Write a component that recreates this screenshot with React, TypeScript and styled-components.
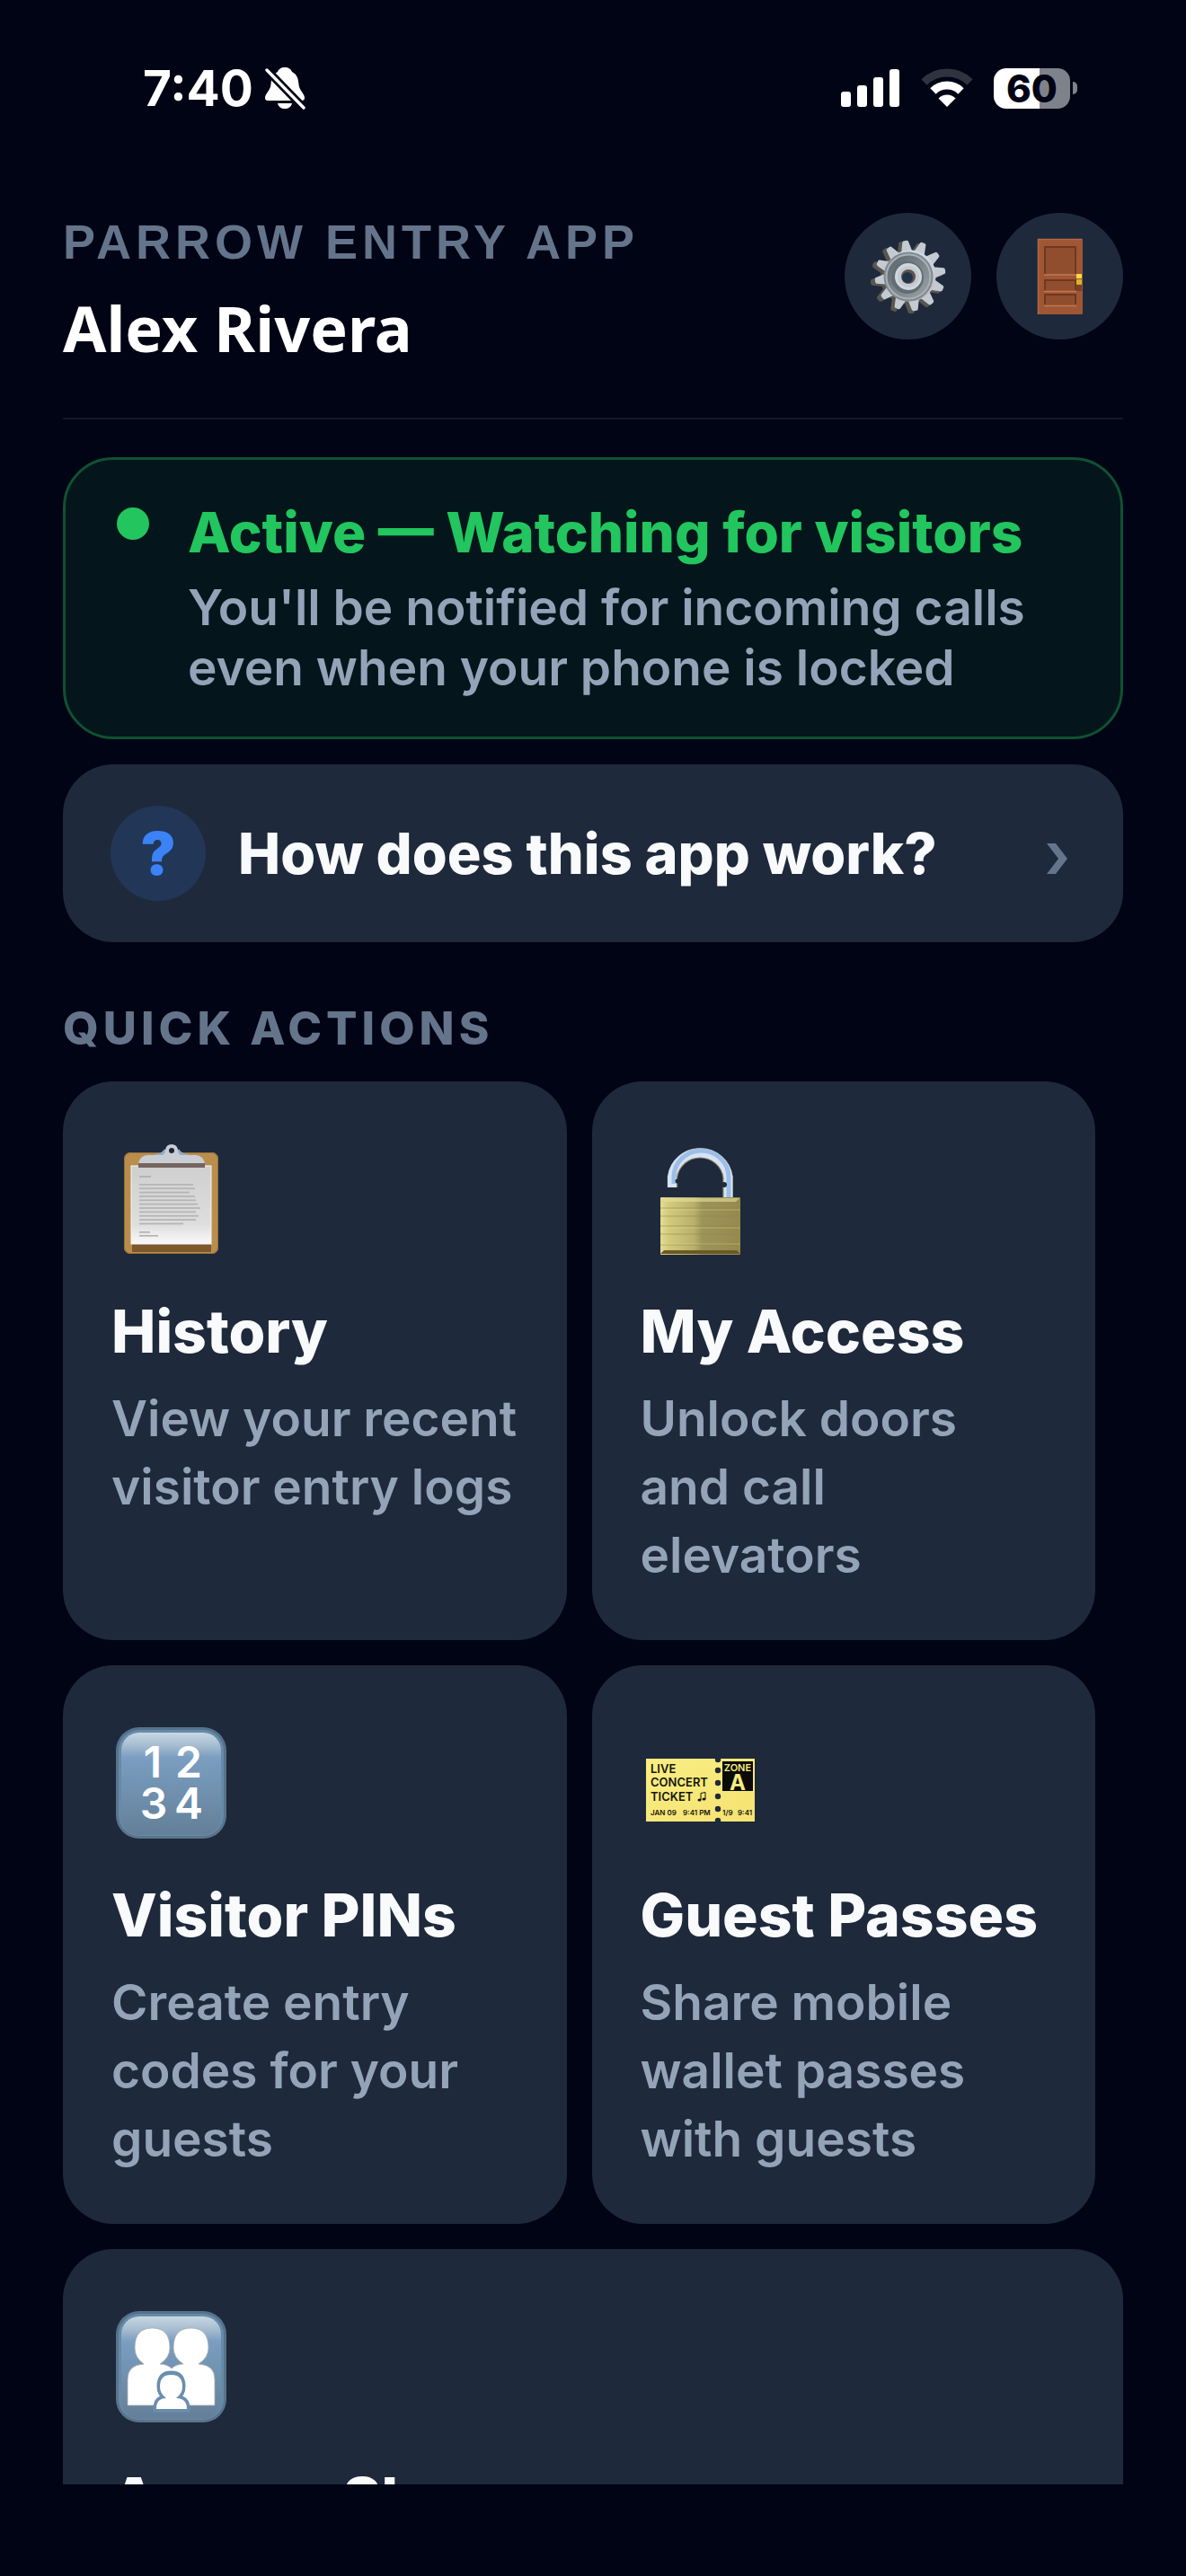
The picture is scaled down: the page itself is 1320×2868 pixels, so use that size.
import React from 'react';
import styled, { createGlobalStyle } from 'styled-components';

const color = {
  page: '#010414',
  panel: '#1e293b',
  text: '#f8fafc',
  body: '#94a3b8',
  muted: '#64748b',
  green: '#22c55e',
  blue: '#3b82f6',
};

const sans = `Inter, 'Liberation Sans', sans-serif`;
const humanist = `'Noto Sans', 'Open Sans', sans-serif`;

const GlobalStyle = createGlobalStyle`
  * { box-sizing: border-box; }
  body { margin: 0; background: ${color.page}; }
  h1, h2, h3, p { margin: 0; }
  button { border: 0; margin: 0; font: inherit; color: inherit; text-align: left; cursor: pointer; }
`;

const Screen = styled.div`
  height: 100vh;
  display: flex;
  flex-direction: column;
  padding-bottom: 102px;
  background: ${color.page};
  color: ${color.text};
  font-family: ${sans};
`;

const StatusBar = styled.div`
  flex: none;
  display: flex;
  align-items: center;
  justify-content: space-between;
  height: 196px;
  padding: 0 121px 0 159px;
`;

const StatusGroup = styled.div<{ $gap: number }>`
  display: flex;
  align-items: center;
  gap: ${(p) => p.$gap}px;
`;

const Clock = styled.span`
  font: 700 55px/64px ${sans};
  color: #fff;
`;

const Battery = styled.div`
  display: flex;
  align-items: center;
  gap: 3px;
`;

const BatteryBody = styled.div<{ $level: number }>`
  width: 85px;
  height: 45px;
  border-radius: 14px;
  background: linear-gradient(
    90deg,
    #fff ${(p) => p.$level}%,
    #80828b ${(p) => p.$level}%
  );
  color: ${color.page};
  font: 800 42px/45px ${sans};
  text-align: center;
`;

const BatteryTip = styled.div`
  width: 5px;
  height: 14px;
  border-radius: 0 7px 7px 0;
  background: #80828b;
`;

const Content = styled.main`
  flex: 1;
  min-height: 0;
  overflow: hidden;
  padding: 41px 70px 0;
`;

const Header = styled.header`
  display: flex;
  justify-content: space-between;
  align-items: flex-start;
  padding-bottom: 56px;
  border-bottom: 2px solid #111827;
`;

const AppName = styled.p`
  font: 700 54px/64px 'Liberation Sans', sans-serif;
  letter-spacing: 5px;
  text-transform: uppercase;
  color: ${color.muted};
`;

const UserName = styled.h1`
  margin-top: 20px;
  font: 700 70px/88px ${humanist};
  color: #fff;
`;

const HeaderActions = styled.div`
  display: flex;
  gap: 28px;
`;

const RoundButton = styled.button`
  display: grid;
  place-items: center;
  width: 141px;
  height: 141px;
  padding: 0;
  border-radius: 50%;
  background: ${color.panel};
`;

const StatusCard = styled.section`
  display: flex;
  align-items: flex-start;
  gap: 43px;
  margin-top: 42px;
  padding: 43px 57px;
  border: 3px solid #0f5132;
  border-radius: 56px;
  background: #04161b;
`;

const Dot = styled.span`
  flex: none;
  width: 36px;
  height: 36px;
  margin-top: 10px;
  border-radius: 50%;
  background: ${color.green};
`;

const StatusTitle = styled.h2`
  font: 800 62px/76px ${sans};
  color: ${color.green};
`;

const StatusText = styled.p`
  margin-top: 12px;
  font: 600 55px/67px ${sans};
  color: ${color.body};
`;

const HelpButton = styled.button`
  display: flex;
  align-items: center;
  gap: 36px;
  width: 100%;
  margin-top: 28px;
  padding: 46px 60px 46px 53px;
  border-radius: 56px;
  background: ${color.panel};
`;

const HelpBadge = styled.span`
  flex: none;
  width: 106px;
  height: 106px;
  border-radius: 50%;
  background: #223657;
  color: ${color.blue};
  font: 900 66px/106px ${sans};
  text-align: center;
`;

const HelpLabel = styled.span`
  flex: 1;
  font: 800 63px/76px ${sans};
  color: ${color.text};
`;

const SectionTitle = styled.h2`
  margin: 66px 0 29px;
  font: 800 51px/60px ${sans};
  letter-spacing: 5px;
  text-transform: uppercase;
  color: ${color.muted};
`;

const ActionList = styled.div`
  display: flex;
  flex-wrap: wrap;
  gap: 28px;
`;

const ActionCard = styled.button<{ $wide?: boolean }>`
  display: flex;
  flex-direction: column;
  align-items: flex-start;
  width: ${(p) => (p.$wide ? '100%' : '47.5%')};
  padding: 69px 50px 57px 54px;
  border-radius: 56px;
  background: ${color.panel};
`;

const ActionTitle = styled.span`
  margin-top: 46px;
  font: 800 66px/78px ${sans};
  color: ${color.text};
`;

const ActionText = styled.span`
  margin-top: 20px;
  font: 600 55px/76px ${sans};
  color: ${color.body};
  white-space: pre-line;
`;

function BellOff() {
  return (
    <svg width="46" height="48" viewBox="0 0 46 48" aria-label="Silent mode">
      <defs>
        <mask id="bell-cut">
          <rect width="46" height="48" fill="#fff" />
          <path d="M3 4 L43 45" stroke="#000" strokeWidth="9" />
        </mask>
      </defs>
      <g fill="#fff" mask="url(#bell-cut)">
        <path d="M23 1c-4 0-7 2-8 5C9 9 8 14 7.500 20C7 27 1 30 1 35c0 2 1 3 3 3h38c2 0 3-1 3-3c0-5-6-8-6.500-15C38 14 37 9 31 6c-1-3-4-5-8-5z" />
        <path d="M15 41h16c-1 4-4 6-8 6s-7-2-8-6z" />
      </g>
      <path d="M3 4 L44 46" stroke="#fff" strokeWidth="3.400" strokeLinecap="round" />
    </svg>
  );
}

function Signal() {
  return (
    <svg width="66" height="44" viewBox="0 0 66 44" fill="#fff" aria-label="Signal">
      <rect x="0" y="26" width="11" height="17" rx="3" />
      <rect x="18" y="19" width="11" height="24" rx="3" />
      <rect x="36" y="10" width="11" height="33" rx="3" />
      <rect x="54" y="1" width="11" height="42" rx="3" />
    </svg>
  );
}

function Wifi() {
  return (
    <svg width="58" height="44" viewBox="0 0 58 44" aria-label="Wi-Fi">
      <g fill="none" strokeWidth="9">
        <path d="M3.500 15.500A36.500 36.500 0 0 1 54.500 15.500" stroke="#30333f" />
        <path d="M13.500 25.500A22 22 0 0 1 44.500 25.500" stroke="#fff" />
      </g>
      <path d="M29 43L19.500 33.500A13.500 13.500 0 0 1 38.500 33.500z" fill="#fff" />
    </svg>
  );
}

const TEETH = Array.from({ length: 12 }, (_, i) => i * 30 - 8);

function GearShape({ fill }: { fill: string }) {
  return (
    <g fill={fill}>
      <circle r="30" />
      {TEETH.map((angle) => (
        <path
          key={angle}
          transform={`rotate(${angle})`}
          d="M-6.500 -28L-3.600 -40Q-3.200 -41.500 -1.500 -41.500H1.500Q3.200 -41.500 3.600 -40L6.500 -28z"
        />
      ))}
    </g>
  );
}

function Gear() {
  return (
    <svg width="86" height="86" viewBox="-43 -43 86 86" aria-hidden="true">
      <defs>
        <linearGradient id="gear-face" x1="0" y1="0" x2="0" y2="1">
          <stop offset="0" stopColor="#cfdbe3" />
          <stop offset="1" stopColor="#bdb8c2" />
        </linearGradient>
        <linearGradient id="gear-dish" x1="0" y1="0" x2="1" y2="1">
          <stop offset="0" stopColor="#59646b" />
          <stop offset="1" stopColor="#9aa3a9" />
        </linearGradient>
      </defs>
      <g transform="translate(-2 1) scale(.97)">
        <GearShape fill="#59564f" />
      </g>
      <g transform="translate(2 -1) scale(.95)">
        <GearShape fill="#c4cad2" />
        <circle r="30" fill="url(#gear-face)" />
      </g>
      <circle r="27.500" fill="#7f898f" />
      <circle r="25.500" fill="#a9b1b6" />
      <circle r="23.500" fill="url(#gear-dish)" />
      <circle r="18" cx="-1" cy="1" fill="#626d73" />
      <circle r="15" fill="#d0d8df" />
      <circle r="12" fill="#c3cad2" />
      <circle r="8" fill="#61544c" />
      <circle r="6" cx="-1" cy="1" fill="#233347" />
    </svg>
  );
}

function Door() {
  return (
    <svg width="52" height="86" viewBox="0 0 52 86" aria-hidden="true">
      <rect x="1" y="1" width="50" height="84" rx="1.500" fill="#9f5634" />
      <path d="M1.500 85V1.500H50.500" fill="none" stroke="#b36a45" strokeWidth="1.500" />
      <g fill="#914e2f">
        <rect x="8" y="9" width="36" height="31" />
        <rect x="8" y="46" width="36" height="13" />
        <rect x="8" y="63" width="36" height="12" />
      </g>
      <g fill="none" stroke="#6f3820" strokeWidth="2">
        <path d="M9 40V10H43V40" />
        <path d="M9 58V47H43V58" />
        <path d="M9 74V63H43V74" />
      </g>
      <g stroke="#c27650" strokeWidth="1.500">
        <path d="M8 41H44M8 59.500H44M8 75.500H44" />
      </g>
      <rect x="44" y="51" width="6" height="8" fill="#7c3f25" />
      <rect x="44" y="40" width="6" height="5" rx="1" fill="#ffdf3d" />
      <rect x="44" y="46" width="6" height="6" rx="1" fill="#d9b22c" />
    </svg>
  );
}

function Chevron() {
  return (
    <svg width="26" height="48" viewBox="0 0 26 48" aria-hidden="true">
      <path d="M1 13h10l13 17l-13 17h-10l13-17z" fill={color.muted} />
    </svg>
  );
}

const LINE_WIDTHS = [60, 62, 56, 62, 63, 65, 68, 63, 66, 63, 49];

function Clipboard() {
  return (
    <svg width="134" height="124" viewBox="0 0 134 124" aria-hidden="true">
      <defs>
        <linearGradient id="board-paper" x1="0" y1="0" x2="0" y2="1">
          <stop offset="0" stopColor="#cfcfcf" />
          <stop offset=".75" stopColor="#dedede" />
          <stop offset="1" stopColor="#fafafa" />
        </linearGradient>
      </defs>
      <rect x="14" y="10" width="105" height="113" rx="7" fill="#b98e4d" />
      <rect x="14.500" y="10.500" width="104" height="112" rx="7" fill="none" stroke="#94703a" />
      <rect x="23" y="111" width="88" height="10" fill="#7d592b" />
      <rect x="22" y="25" width="89" height="87" fill="url(#board-paper)" stroke="#f5f5f5" />
      <path d="M48 14Q58 12 60 7M86 14Q76 12 74 7" fill="none" stroke="#8fabd0" strokeWidth="3" />
      <path d="M30 26V23Q31 14 40 13H56Q60 12 60 7Q61 1 67 1T74 7Q74 12 78 13H94Q103 14 104 23V26z" fill="#c9ced5" />
      <rect x="30" y="22" width="74" height="5" fill="#74655f" />
      <circle cx="67" cy="8" r="3" fill="#1c2534" />
      <g fill="#b4b4b4">
        <rect x="31" y="36" width="13" height="2" />
        {LINE_WIDTHS.map((w, i) => (
          <rect key={i} x="31" y={45 + i * 4.36} width={w} height="1.700" />
        ))}
        <rect x="31" y="98" width="12" height="1.700" />
        <rect x="31" y="102" width="21" height="1.700" />
      </g>
    </svg>
  );
}

function OpenLock() {
  return (
    <svg width="134" height="124" viewBox="0 0 134 124" aria-hidden="true">
      <defs>
        <linearGradient id="brass" x1="0" y1="0" x2="1" y2="0">
          <stop offset="0" stopColor="#e3dd92" />
          <stop offset=".1" stopColor="#d2cb7c" />
          <stop offset=".42" stopColor="#b9b06c" />
          <stop offset=".52" stopColor="#9b955a" />
          <stop offset="1" stopColor="#958a4d" />
        </linearGradient>
      </defs>
      <g fill="none">
        <path d="M35.500 49V37.500A31 30.500 0 0 1 97 37.500V62" stroke="#8a7b5e" strokeWidth="11.500" />
        <path d="M35 49V37.500A31.500 31 0 0 1 97.500 37.500V62" stroke="#d5e3f4" strokeWidth="10" />
        <path d="M37 45V37.500A30 29 0 0 1 98 37.500V62" stroke="#9cbfe8" strokeWidth="5" />
      </g>
      <circle cx="41" cy="42" r="2.500" fill={color.panel} />
      <circle cx="93" cy="46" r="3" fill={color.panel} />
      <rect x="22" y="60" width="89" height="64" rx="1" fill="url(#brass)" />
      <path d="M22 72H111M22 81H111M22 92H111M22 101H111M22 113H111" stroke="#8f8649" strokeOpacity=".55" />
      <path d="M22 74H111M22 94H111M22 112H111" stroke="#eee8a4" strokeOpacity=".35" />
      <path d="M23 61H110L106 65H27z" fill="#e6dfa0" fillOpacity=".6" />
      <path d="M22 123L26 119H107L111 123z" fill="#6a5a26" />
    </svg>
  );
}

const GlyphText = styled.text<{ $size: number; $weight?: number }>`
  font: ${(p) => p.$weight ?? 600} ${(p) => p.$size}px ${sans};
`;

function TileFace({ id }: { id: string }) {
  return (
    <>
      <defs>
        <linearGradient id={`${id}-edge`} x1="0" y1="0" x2="0" y2="1">
          <stop offset="0" stopColor="#56728b" />
          <stop offset="1" stopColor="#5b758b" />
        </linearGradient>
        <linearGradient id={`${id}-face`} x1="0" y1="0" x2="0" y2="1">
          <stop offset="0" stopColor="#c8d7e3" />
          <stop offset=".13" stopColor="#a5bccf" />
          <stop offset=".24" stopColor="#7b9ec1" />
          <stop offset=".5" stopColor="#7294b3" />
          <stop offset="1" stopColor="#647f98" />
        </linearGradient>
      </defs>
      <rect x="5" y="0" width="123" height="124" rx="26" fill={`url(#${id}-edge)`} />
      <rect x="8" y="3" width="117" height="118" rx="23" fill="#668aa9" />
      <rect x="11" y="6" width="111" height="114" rx="20" fill={`url(#${id}-face)`} />
    </>
  );
}

function NumberPad() {
  return (
    <svg width="134" height="124" viewBox="0 0 134 124" aria-hidden="true">
      <TileFace id="pad" />
      <g fill="#fff" textAnchor="middle">
        <GlyphText $size={48} x="46" y="56">1</GlyphText>
        <GlyphText $size={48} x="86" y="56">2</GlyphText>
        <GlyphText $size={48} x="47" y="102">3</GlyphText>
        <GlyphText $size={48} x="86" y="102">4</GlyphText>
      </g>
    </svg>
  );
}

function Ticket() {
  return (
    <svg width="134" height="124" viewBox="0 0 134 124" aria-hidden="true">
      <defs>
        <linearGradient id="ticket" x1="0" y1="0" x2="1" y2="1">
          <stop offset="0" stopColor="#f9ee83" />
          <stop offset="1" stopColor="#f5e272" />
        </linearGradient>
      </defs>
      <rect x="6" y="35" width="121" height="70" fill="url(#ticket)" />
      <g fill={color.panel}>
        {[36, 48, 62, 77, 91, 104].map((y) => (
          <circle key={y} cx="86" cy={y} r="3.200" />
        ))}
      </g>
      <rect x="91" y="38" width="34" height="33" fill="#0a0a08" />
      <g fill="#151509">
        <GlyphText $size={13} x="11" y="51">LIVE</GlyphText>
        <GlyphText $size={13} x="11" y="66">CONCERT</GlyphText>
        <GlyphText $size={13} x="11" y="82">TICKET</GlyphText>
        <GlyphText $size={8} x="11" y="98">JAN 09</GlyphText>
        <GlyphText $size={8} x="47" y="98">9:41 PM</GlyphText>
        <GlyphText $size={8} x="91" y="98">1/9</GlyphText>
        <GlyphText $size={8} x="108" y="98">9:41</GlyphText>
        <ellipse cx="65.500" cy="81" rx="2" ry="1.600" />
        <ellipse cx="70.500" cy="80" rx="2" ry="1.600" />
        <path d="M67 81V73.500L72 72.500V80" fill="none" stroke="#151509" />
      </g>
      <g fill="#f6eb80" textAnchor="middle">
        <GlyphText $size={11} x="108" y="49">ZONE</GlyphText>
        <GlyphText $size={24} $weight={700} x="108" y="70">A</GlyphText>
      </g>
    </svg>
  );
}

function Family() {
  return (
    <svg width="134" height="124" viewBox="0 0 134 124" aria-hidden="true">
      <TileFace id="family" />
      <g fill="#fff" stroke="#a9a9a9" strokeWidth=".8">
        <path d="M36 59Q26 52 26 41Q26 19 45.500 19T65 41Q65 52 54 59Q62 59 67 64Q72 59 80 59Q69 52 69 41Q69 19 88.500 19T108 41Q108 52 97 59Q115 60 115 76V105H18V76Q18 60 36 59z" />
      </g>
      <path
        d="M61 97Q54 92 54 84Q54 70 66.500 70T79 84Q79 92 72 97Q84 97 84 109H50Q50 97 61 97z"
        fill="#6a8eae"
        stroke="#6a8eae"
        strokeWidth="7"
      />
      <path d="M61 97Q54 92 54 84Q54 71 66.500 71T79 84Q79 92 72 97Q84 97 84 109H50Q50 97 61 97z" fill="#fff" />
    </svg>
  );
}

const ACTIONS = [
  { title: 'History', text: 'View your recent\nvisitor entry logs', Icon: Clipboard },
  { title: 'My Access', text: 'Unlock doors\nand call\nelevators', Icon: OpenLock },
  { title: 'Visitor PINs', text: 'Create entry\ncodes for your\nguests', Icon: NumberPad },
  { title: 'Guest Passes', text: 'Share mobile\nwallet passes\nwith guests', Icon: Ticket },
  { title: 'Access Share', text: '', Icon: Family, wide: true },
];

export default function App() {
  return (
    <Screen>
      <GlobalStyle />
      <StatusBar>
        <StatusGroup $gap={12}>
          <Clock>7:40</Clock>
          <BellOff />
        </StatusGroup>
        <StatusGroup $gap={23}>
          <Signal />
          <Wifi />
          <Battery>
            <BatteryBody $level={60}>60</BatteryBody>
            <BatteryTip />
          </Battery>
        </StatusGroup>
      </StatusBar>
      <Content>
        <Header>
          <div>
            <AppName>Parrow Entry App</AppName>
            <UserName>Alex Rivera</UserName>
          </div>
          <HeaderActions>
            <RoundButton aria-label="Settings">
              <Gear />
            </RoundButton>
            <RoundButton aria-label="Sign out">
              <Door />
            </RoundButton>
          </HeaderActions>
        </Header>
        <StatusCard>
          <Dot />
          <div>
            <StatusTitle>Active — Watching for visitors</StatusTitle>
            <StatusText>You'll be notified for incoming calls even when your phone is locked</StatusText>
          </div>
        </StatusCard>
        <HelpButton>
          <HelpBadge>?</HelpBadge>
          <HelpLabel>How does this app work?</HelpLabel>
          <Chevron />
        </HelpButton>
        <SectionTitle>Quick Actions</SectionTitle>
        <ActionList>
          {ACTIONS.map(({ title, text, Icon, wide }) => (
            <ActionCard key={title} $wide={wide}>
              <Icon />
              <ActionTitle>{title}</ActionTitle>
              {text && <ActionText>{text}</ActionText>}
            </ActionCard>
          ))}
        </ActionList>
      </Content>
    </Screen>
  );
}
